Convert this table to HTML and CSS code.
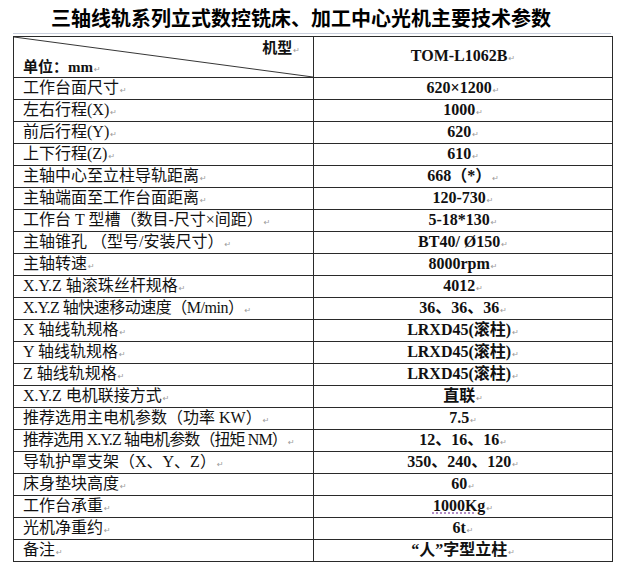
FILE: index.html
```html
<!DOCTYPE html>
<html lang="zh-CN">
<head>
<meta charset="utf-8">
<title>三轴线轨系列立式数控铣床、加工中心光机主要技术参数</title>
<link rel="stylesheet" href="styles.css">
</head>
<body>
<div class="title">三轴线轨系列立式数控铣床、加工中心光机主要技术参数</div>
<table class="spec">
  <colgroup><col class="c1"><col class="c2"></colgroup>
  <tr class="head">
    <td class="diag">
      <svg class="diag-line" viewBox="0 0 300 41" preserveAspectRatio="none"><line x1="0" y1="0" x2="300" y2="41" stroke="#333" stroke-width="1"/></svg>
      <div class="diag-inner">
        <div class="model">机型<span class="pm">↵</span></div>
        <div class="unit">单位：mm<span class="pm">↵</span></div>
      </div>
    </td>
    <td class="val">TOM-L1062B<span class="pm">↵</span></td>
  </tr>
  <tr><td class="lab">工作台面尺寸<span class="pm">↵</span></td><td class="val">620×1200<span class="pm">↵</span></td></tr>
  <tr><td class="lab">左右行程(X)<span class="pm">↵</span></td><td class="val">1000<span class="pm">↵</span></td></tr>
  <tr><td class="lab">前后行程(Y)<span class="pm">↵</span></td><td class="val">620<span class="pm">↵</span></td></tr>
  <tr><td class="lab">上下行程(Z)<span class="pm">↵</span></td><td class="val">610<span class="pm">↵</span></td></tr>
  <tr><td class="lab">主轴中心至立柱导轨距离<span class="pm">↵</span></td><td class="val">668（*）<span class="pm">↵</span></td></tr>
  <tr><td class="lab">主轴端面至工作台面距离<span class="pm">↵</span></td><td class="val">120-730<span class="pm">↵</span></td></tr>
  <tr><td class="lab">工作台 T 型槽（数目-尺寸×间距）<span class="pm">↵</span></td><td class="val">5-18*130<span class="pm">↵</span></td></tr>
  <tr><td class="lab">主轴锥孔 （型号/安装尺寸）<span class="pm">↵</span></td><td class="val">BT40/ Ø150<span class="pm">↵</span></td></tr>
  <tr><td class="lab">主轴转速<span class="pm">↵</span></td><td class="val">8000rpm<span class="pm">↵</span></td></tr>
  <tr><td class="lab">X.Y.Z 轴滚珠丝杆规格<span class="pm">↵</span></td><td class="val">4012<span class="pm">↵</span></td></tr>
  <tr><td class="lab tight-s">X.Y.Z 轴快速移动速度（M/min）<span class="pm">↵</span></td><td class="val">36、36、36<span class="pm">↵</span></td></tr>
  <tr><td class="lab">X 轴线轨规格<span class="pm">↵</span></td><td class="val">LRXD45(滚柱)<span class="pm">↵</span></td></tr>
  <tr><td class="lab">Y 轴线轨规格<span class="pm">↵</span></td><td class="val">LRXD45(滚柱)<span class="pm">↵</span></td></tr>
  <tr><td class="lab">Z 轴线轨规格<span class="pm">↵</span></td><td class="val">LRXD45(滚柱)<span class="pm">↵</span></td></tr>
  <tr class="short"><td class="lab">X.Y.Z 电机联接方式<span class="pm">↵</span></td><td class="val">直联<span class="pm">↵</span></td></tr>
  <tr><td class="lab">推荐选用主电机参数（功率 KW）<span class="pm">↵</span></td><td class="val">7.5<span class="pm">↵</span></td></tr>
  <tr><td class="lab tight">推荐选用 X.Y.Z 轴电机参数（扭矩 NM）<span class="pm">↵</span></td><td class="val">12、16、16<span class="pm">↵</span></td></tr>
  <tr class="short"><td class="lab">导轨护罩支架（X、Y、Z）<span class="pm">↵</span></td><td class="val">350、240、120<span class="pm">↵</span></td></tr>
  <tr><td class="lab">床身垫块高度<span class="pm">↵</span></td><td class="val">60<span class="pm">↵</span></td></tr>
  <tr><td class="lab">工作台承重<span class="pm">↵</span></td><td class="val"><span class="check">1000Kg</span><span class="pm">↵</span></td></tr>
  <tr class="short"><td class="lab">光机净重约<span class="pm">↵</span></td><td class="val">6t<span class="pm">↵</span></td></tr>
  <tr><td class="lab">备注<span class="pm">↵</span></td><td class="val">“人”字型立柱<span class="pm">↵</span></td></tr>
</table>
</body>
</html>
```

FILE: styles.css
```css
html, body {
  margin: 0;
  padding: 0;
  background: #ffffff;
}

body {
  width: 621px;
  height: 564px;
  overflow: hidden;
  color: #111;
}

.title {
  box-sizing: border-box;
  margin: 0 10px 0 13px;
  height: 34px;
  padding: 3px 0 0 38px;
  line-height: 29px;
  font-family: "Noto Sans CJK SC", sans-serif;
  font-weight: 700;
  font-size: 20px;
  color: #000;
  white-space: nowrap;
  border-bottom: 1px solid #c9cfdc;
}

.spec {
  margin: 2px 0 0 13px;
  width: 599px;
  table-layout: fixed;
  border-collapse: collapse;
}

.c1 { width: 300px; }
.c2 { width: 299px; }

.spec td {
  border: 1px solid #2a2a2a;
  padding: 2px 0 0 0;
  height: 19px;
  line-height: 16px;
  font-size: 16px;
  white-space: nowrap;
  overflow: hidden;
  vertical-align: middle;
}

.spec tr.short td { height: 18px; }

.spec tr.head td { height: 40px; padding: 0; }

.lab {
  padding-left: 9px !important;
  font-family: "Liberation Serif", "Noto Sans CJK SC", serif;
  font-weight: 400;
  color: #111;
}

.tight { letter-spacing: -0.9px; }
.tight-s { letter-spacing: -0.5px; }

.val {
  text-align: center;
  font-family: "Liberation Serif", "Noto Sans CJK SC", serif;
  font-weight: 700;
  color: #111;
}

.diag {
  position: relative;
}

.diag-line {
  position: absolute;
  left: 0;
  top: 0;
  width: 100%;
  height: 100%;
}

.diag-inner {
  display: flex;
  flex-direction: column;
  justify-content: space-between;
  height: 40px;
  box-sizing: border-box;
  padding: 3px 13px 2px 9px;
  font-family: "Liberation Serif", "Noto Sans CJK SC", serif;
  font-weight: 700;
  font-size: 15px;
  line-height: 16px;
}

.model { text-align: right; }
.unit { text-align: left; }

.pm {
  font-family: "DejaVu Sans", sans-serif;
  font-weight: 400;
  font-size: 8px;
  color: #9a9a9a;
  margin-left: 1px;
  letter-spacing: 0;
  vertical-align: baseline;
}

.check {
  text-decoration: underline dotted #a070b8;
  text-underline-offset: 2px;
}
```
